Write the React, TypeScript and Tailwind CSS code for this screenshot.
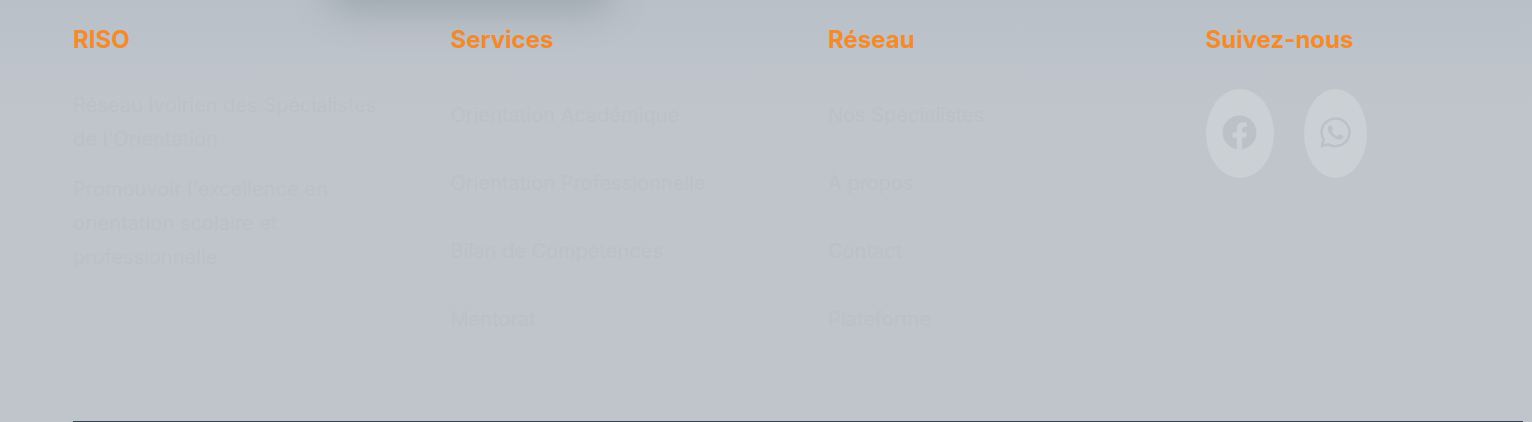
import { FaFacebook, FaWhatsapp } from 'react-icons/fa'

const SERVICES = ['Orientation Académique', 'Orientation Professionnelle', 'Bilan de Compétences', 'Mentorat']
const NETWORK = ['Nos Spécialistes', 'À propos', 'Contact', 'Plateforme']

function Heading({ children }: { children: string }) {
  return <h3 className="text-2xl leading-[32px] font-bold text-[#f58a2b]">{children}</h3>
}

function LinkColumn({ title, links }: { title: string; links: string[] }) {
  return (
    <div>
      <Heading>{title}</Heading>
      <ul className="mt-[42px] flex flex-col gap-[34px]">
        {links.map((l) => (
          <li key={l} className="text-xl leading-[34px] text-[#bcc1c6]">
            {l}
          </li>
        ))}
      </ul>
    </div>
  )
}

export default function App() {
  return (
    <footer className="relative h-[422px] w-[1532px] overflow-hidden bg-gradient-to-b from-[#b9c0c7] to-[#c0c5cc] to-[25%] pl-[73px] pr-[9px] pt-[24px] font-['Inter',sans-serif]">
      {/* shadow of the card sitting above the footer */}
      <div className="absolute -top-[30px] left-[340px] h-[30px] w-[260px] rounded-xl shadow-[0_0_34px_12px_rgba(125,135,145,0.42)]" />

      <div className="grid h-[398px] grid-cols-4 gap-x-[60px] border-b border-[#334155]">
        <div>
          <Heading>RISO</Heading>
          <div className="mt-[32px] flex flex-col gap-4 text-xl leading-[34px] text-[#bcc1c6]">
            <p>Réseau Ivoirien des Spécialistes de l'Orientation</p>
            <p className="w-[280px]">Promouvoir l'excellence en orientation scolaire et professionnelle</p>
          </div>
        </div>

        <LinkColumn title="Services" links={SERVICES} />
        <LinkColumn title="Réseau" links={NETWORK} />

        <div>
          <Heading>Suivez-nous</Heading>
          <div className="mt-[33px] flex gap-[30px]">
            <a className="flex h-[89px] items-center rounded-[50%] bg-[#cbd0d5] px-[16.5px] pb-[2px] text-[#bcc1c8]">
              <FaFacebook className="h-[35px] w-[35px]" />
            </a>
            <a className="flex h-[89px] items-center rounded-[50%] bg-[#cbd0d5] px-4 pb-[2px] text-[#bcc1c8]">
              <FaWhatsapp className="h-[35px] w-[31px]" />
            </a>
          </div>
        </div>
      </div>
    </footer>
  )
}
